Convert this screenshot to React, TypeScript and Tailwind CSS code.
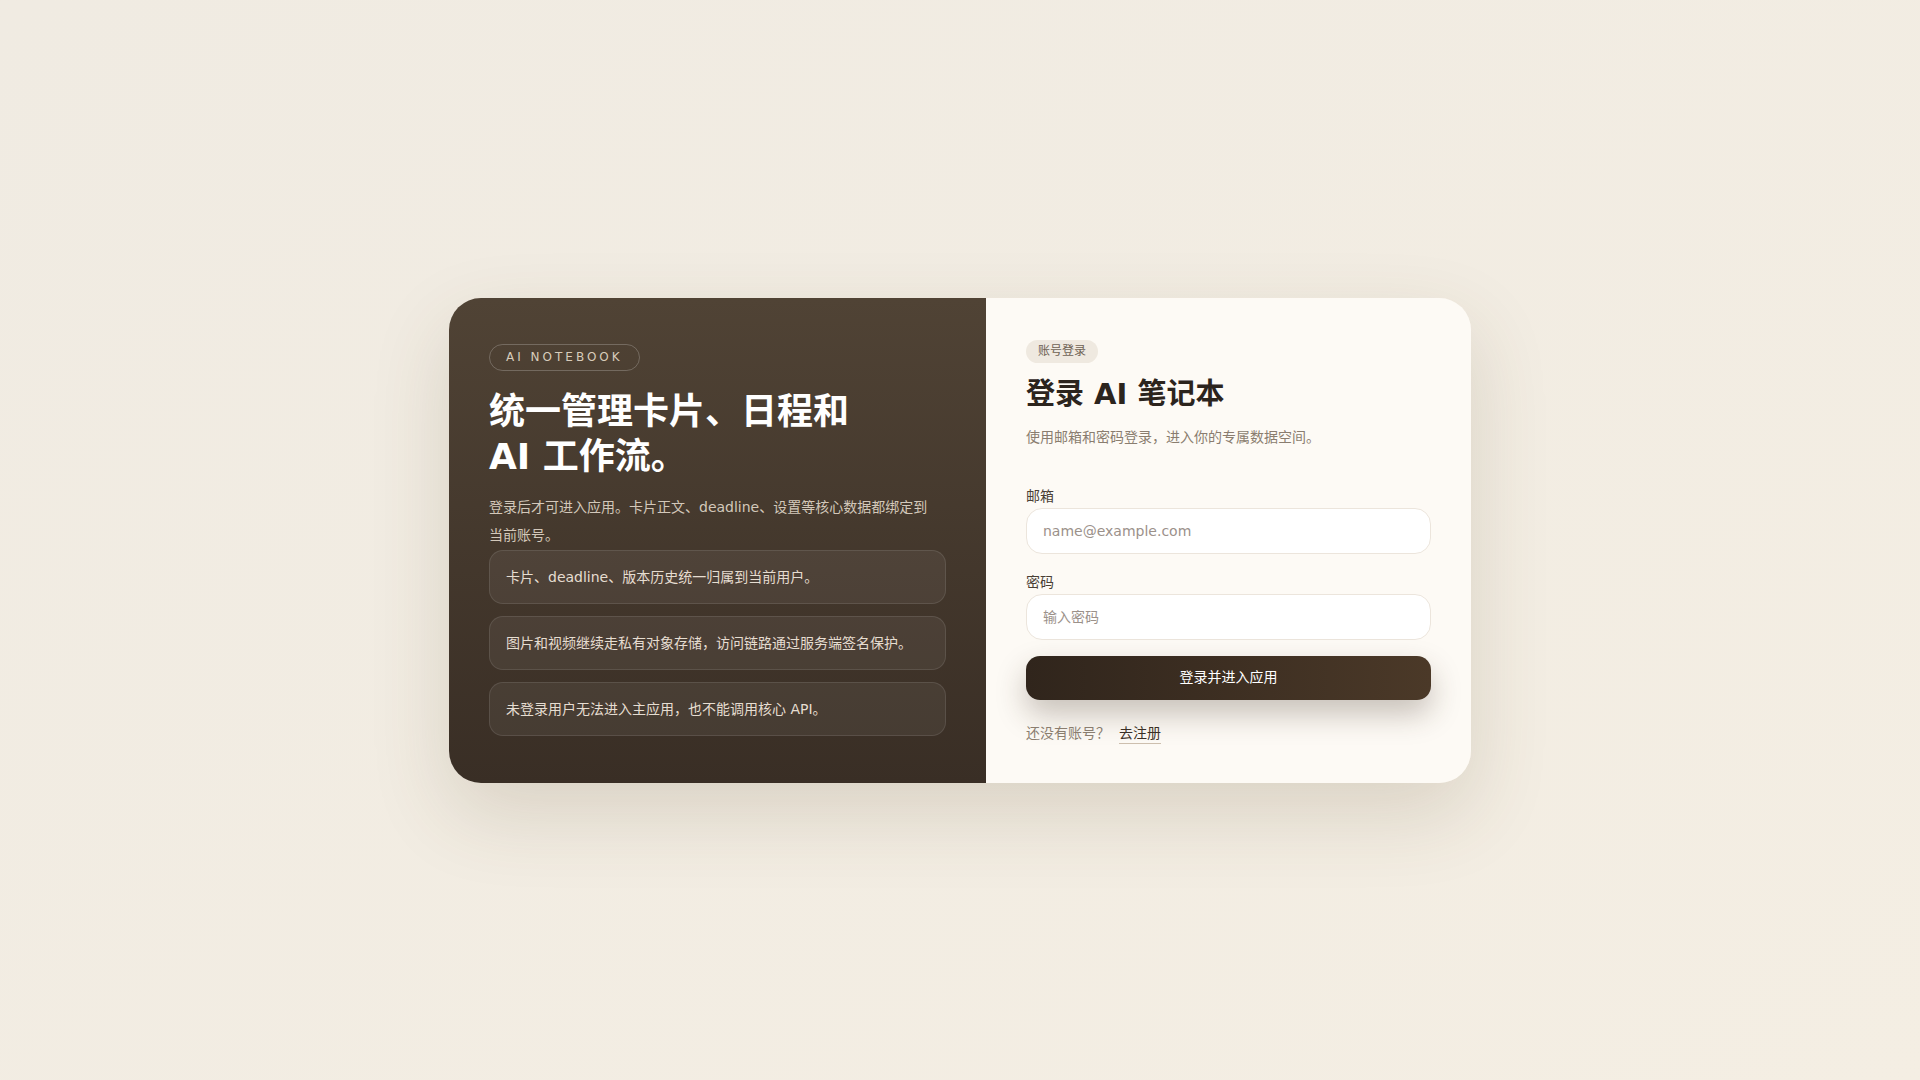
import { useState } from "react";

const points = [
  "卡片、deadline、版本历史统一归属到当前用户。",
  "图片和视频继续走私有对象存储，访问链路通过服务端签名保护。",
  "未登录用户无法进入主应用，也不能调用核心 API。",
];

export default function App() {
  const [email, setEmail] = useState("");
  const [password, setPassword] = useState("");

  return (
    <div
      className="min-h-screen w-full flex items-center justify-center bg-gradient-to-br from-[#f0ebe2] to-[#f4eee3]"
      style={{ fontFamily: '"DejaVu Sans", "Noto Sans CJK SC", sans-serif' }}
    >
      <div className="grid grid-cols-[537px_485px] rounded-[32px] overflow-hidden shadow-[0_30px_80px_rgba(90,66,40,0.16)]">
        {/* left intro */}
        <div className="flex flex-col justify-center px-10 py-10 bg-gradient-to-b from-[#504335] to-[#392e25]">
          <span className="self-start rounded-full border border-[rgba(255,255,255,0.22)] px-[16px] py-[4px] text-[12px] leading-[17px] tracking-[0.25em] text-[#d8ccbb]">
            AI NOTEBOOK
          </span>
          <h1 className="mt-[18px] text-[36px] leading-[45px] font-bold text-white">
            统一管理卡片、日程和
            <br />
            AI 工作流。
          </h1>
          <p className="mt-[14px] max-w-[445px] text-[14px] leading-[28px] text-[#d3c8ba]">
            登录后才可进入应用。卡片正文、deadline、设置等核心数据都绑定到当前账号。
          </p>
          <div className="mt-px flex flex-col gap-3">
            {points.map((p) => (
              <div
                key={p}
                className="rounded-[14px] border border-[rgba(255,255,255,0.1)] bg-[rgba(255,255,255,0.06)] px-4 py-4 text-[14px] leading-[20px] text-[#e6ddd1]"
              >
                {p}
              </div>
            ))}
          </div>
        </div>

        {/* right form */}
        <div className="bg-[#fdfaf5] px-10 pt-[42px] pb-[39px] flex flex-col">
          <span className="self-start rounded-full bg-[#efe9e0] px-[12px] py-[3px] text-[12px] leading-[17px] text-[#6e6254]">
            账号登录
          </span>
          <h2 className="mt-[14px] text-[29px] leading-[34px] font-bold text-[#2c241d]">
            登录 AI 笔记本
          </h2>
          <p className="mt-[15px] text-[14px] leading-[22px] text-[#8a7d6f]">
            使用邮箱和密码登录，进入你的专属数据空间。
          </p>

          <label className="mt-[38px] text-[14px] leading-[20px] text-[#4a3f35]">邮箱</label>
          <input
            value={email}
            onChange={(e) => setEmail(e.target.value)}
            placeholder="name@example.com"
            className="mt-[2px] h-[46px] w-full rounded-[16px] border border-[#ece5dc] bg-white px-4 text-[14px] text-[#2c241d] placeholder:text-[#9b918a] outline-none"
          />

          <label className="mt-[18px] text-[14px] leading-[20px] text-[#4a3f35]">密码</label>
          <input
            type="password"
            value={password}
            onChange={(e) => setPassword(e.target.value)}
            placeholder="输入密码"
            className="mt-[2px] h-[46px] w-full rounded-[16px] border border-[#ece5dc] bg-white px-4 text-[14px] text-[#2c241d] placeholder:text-[#9b918a] outline-none"
          />

          <button className="mt-[16px] h-[44px] w-full rounded-[14px] bg-gradient-to-r from-[#30251c] to-[#4b3928] text-[14px] text-white shadow-[0_14px_30px_rgba(60,44,28,0.28)]">
            登录并进入应用
          </button>

          <div className="mt-[23px] flex items-center gap-[9px] text-[14px] leading-[20px]">
            <span className="text-[#8a7d6f]">还没有账号？</span>
            <a href="#" className="text-[#3a2f25] border-b border-[#cdbfae]">
              去注册
            </a>
          </div>
        </div>
      </div>
    </div>
  );
}
